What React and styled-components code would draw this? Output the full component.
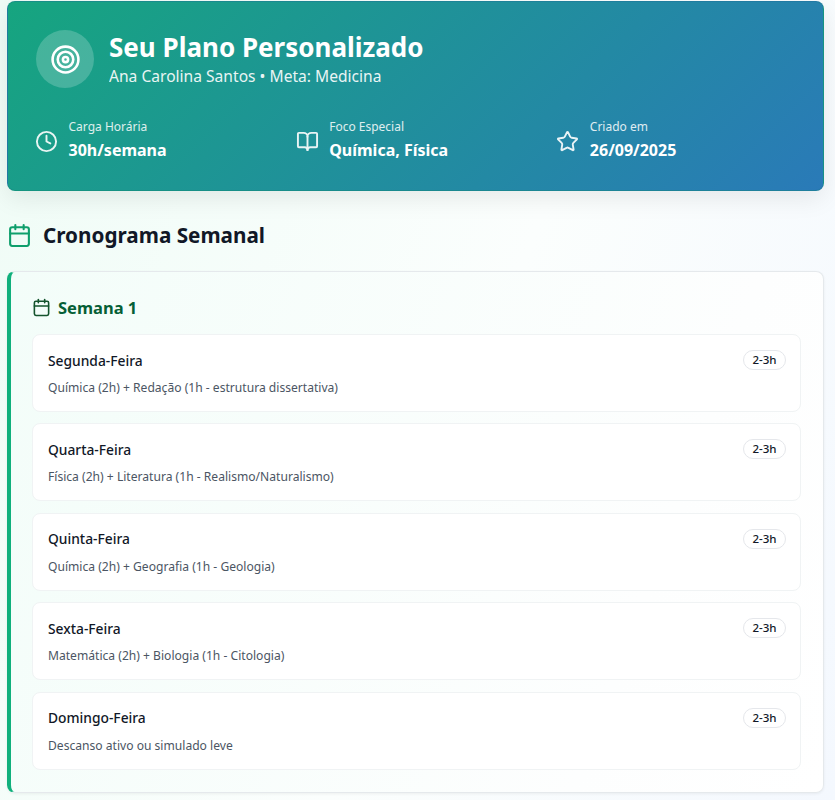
import React from "react";
import styled, { createGlobalStyle } from "styled-components";

const Global = createGlobalStyle`
  html, body { margin: 0; padding: 0; }
  body {
    min-height: 800px;
    overflow: hidden;
    background: linear-gradient(110deg, #effcf6 0%, #fbfefd 55%, #f4f8fe 100%);
    font-family: "Noto Sans", "Open Sans", sans-serif;
    color: #111827;
  }
`;

const Page = styled.main`
  display: flex;
  flex-direction: column;
  width: 817px;
  padding: 1px 0 0 7px;
`;

const Hero = styled.section`
  box-sizing: border-box;
  height: 190px;
  padding: 28px 28px 0;
  border-radius: 8px;
  border: 1px solid rgba(20, 120, 130, 0.35);
  background: linear-gradient(135deg, #16a57f 0%, #2a7ab8 100%);
  box-shadow: 0 8px 24px rgba(0, 0, 0, 0.08);
  color: #fff;
`;

const HeroTop = styled.div`
  display: flex;
  align-items: center;
  gap: 15px;
`;

const Badge = styled.div`
  display: flex;
  align-items: center;
  justify-content: center;
  width: 58px;
  height: 58px;
  border-radius: 50%;
  background: rgba(255, 255, 255, 0.2);
`;

const Title = styled.h1`
  margin: 0;
  font-size: 26px;
  line-height: 35px;
  font-weight: 700;
`;

const Subtitle = styled.p`
  margin: 0;
  font-size: 15.6px;
  line-height: 23px;
  font-weight: 400;
  opacity: 0.9;
`;

const Stats = styled.div`
  display: grid;
  grid-template-columns: repeat(3, 1fr);
  column-gap: 23px;
  margin-top: 30px;
`;

const Stat = styled.div`
  display: flex;
  align-items: center;
  gap: 10.5px;
`;

const StatIcon = styled.span`
  display: flex;
  margin-left: -1px;
  opacity: 0.9;
`;

const StatText = styled.div`
  display: flex;
  flex-direction: column;
`;

const StatLabel = styled.span`
  font-size: 12px;
  line-height: 18px;
  opacity: 0.85;
`;

const StatValue = styled.span`
  font-size: 16px;
  line-height: 28px;
  font-weight: 700;
`;

const SectionHead = styled.div`
  display: flex;
  align-items: center;
  gap: 11px;
  height: 30px;
  margin-top: 29px;
  color: #0f9f6c;
`;

const SectionTitle = styled.h2`
  margin: 0;
  font-size: 20.7px;
  font-weight: 700;
  color: #111827;
`;

const WeekCard = styled.section`
  box-sizing: border-box;
  height: 522px;
  margin-top: 21px;
  padding: 22px 22px 0 21px;
  border: 1px solid #e5e9ec;
  border-left: 4px solid #10b07c;
  border-radius: 8px;
  background: linear-gradient(110deg, #f3fdf9 0%, #fdfefe 75%, #ffffff 100%);
  box-shadow: 0 1px 3px rgba(0, 0, 0, 0.06);
`;

const WeekHead = styled.div`
  display: flex;
  align-items: center;
  gap: 7px;
  height: 26px;
  color: #14532d;
`;

const WeekTitle = styled.h3`
  margin: 0;
  font-size: 16.5px;
  font-weight: 700;
  color: #065f36;
`;

const Days = styled.div`
  display: flex;
  flex-direction: column;
  gap: 11.4px;
  margin-top: 14px;
`;

const Day = styled.article`
  box-sizing: border-box;
  height: 78px;
  padding: 14px 14px 0 15px;
  border: 1px solid #f0f3f4;
  border-radius: 8px;
  background: #fff;
`;

const DayTop = styled.div`
  display: flex;
  align-items: center;
  justify-content: space-between;
  height: 22px;
`;

const DayName = styled.h4`
  margin: 0;
  font-size: 13.8px;
  font-weight: 500;
  color: #111827;
`;

const Pill = styled.span`
  box-sizing: border-box;
  width: 43px;
  height: 20px;
  border: 1px solid #e5e7eb;
  border-radius: 10px;
  font-size: 11.5px;
  line-height: 18px;
  font-weight: 500;
  text-align: center;
  color: #111827;
`;

const DayText = styled.p`
  margin: 8px 0 0;
  font-size: 12.1px;
  line-height: 18px;
  color: #4b5563;
`;

const Svg = ({ size, children }) => (
  <svg width={size} height={size} viewBox="0 0 24 24" fill="none" stroke="currentColor" strokeWidth={2} strokeLinecap="round" strokeLinejoin="round">
    {children}
  </svg>
);

const Target = () => (
  <Svg size={31}>
    <circle cx="12" cy="12" r="10" />
    <circle cx="12" cy="12" r="6" />
    <circle cx="12" cy="12" r="2" />
  </Svg>
);
const Clock = () => (
  <Svg size={23}>
    <circle cx="12" cy="12" r="10" />
    <path d="M12 6v6l4 2" />
  </Svg>
);
const Book = () => (
  <Svg size={23}>
    <path d="M12 7v14" />
    <path d="M3 18a1 1 0 0 1-1-1V4a1 1 0 0 1 1-1h5a4 4 0 0 1 4 4 4 4 0 0 1 4-4h5a1 1 0 0 1 1 1v13a1 1 0 0 1-1 1h-6a3 3 0 0 0-3 3 3 3 0 0 0-3-3z" />
  </Svg>
);
const Star = () => (
  <Svg size={23}>
    <path d="M11.525 2.295a.53.53 0 0 1 .95 0l2.31 4.679a2.123 2.123 0 0 0 1.595 1.16l5.166.756a.53.53 0 0 1 .294.904l-3.736 3.638a2.123 2.123 0 0 0-.611 1.878l.882 5.14a.53.53 0 0 1-.771.56l-4.618-2.428a2.122 2.122 0 0 0-1.973 0L6.396 21.01a.53.53 0 0 1-.77-.56l.881-5.139a2.122 2.122 0 0 0-.611-1.879L2.16 9.795a.53.53 0 0 1 .294-.906l5.165-.755a2.122 2.122 0 0 0 1.597-1.16z" />
  </Svg>
);
const Calendar = ({ size }) => (
  <Svg size={size}>
    <path d="M8 2v4" />
    <path d="M16 2v4" />
    <rect width="18" height="18" x="3" y="4" rx="2" />
    <path d="M3 10h18" />
  </Svg>
);

const stats = [
  { icon: <Clock />, label: "Carga Horária", value: "30h/semana" },
  { icon: <Book />, label: "Foco Especial", value: "Química, Física" },
  { icon: <Star />, label: "Criado em", value: "26/09/2025" },
];

const days = [
  ["Segunda-Feira", "Química (2h) + Redação (1h - estrutura dissertativa)"],
  ["Quarta-Feira", "Física (2h) + Literatura (1h - Realismo/Naturalismo)"],
  ["Quinta-Feira", "Química (2h) + Geografia (1h - Geologia)"],
  ["Sexta-Feira", "Matemática (2h) + Biologia (1h - Citologia)"],
  ["Domingo-Feira", "Descanso ativo ou simulado leve"],
];

export default function App() {
  return (
    <Page>
      <Global />
      <Hero>
        <HeroTop>
          <Badge><Target /></Badge>
          <div>
            <Title>Seu Plano Personalizado</Title>
            <Subtitle>Ana Carolina Santos • Meta: Medicina</Subtitle>
          </div>
        </HeroTop>
        <Stats>
          {stats.map((s) => (
            <Stat key={s.label}>
              <StatIcon>{s.icon}</StatIcon>
              <StatText>
                <StatLabel>{s.label}</StatLabel>
                <StatValue>{s.value}</StatValue>
              </StatText>
            </Stat>
          ))}
        </Stats>
      </Hero>
      <SectionHead>
        <Calendar size={25} />
        <SectionTitle>Cronograma Semanal</SectionTitle>
      </SectionHead>
      <WeekCard>
        <WeekHead>
          <Calendar size={19} />
          <WeekTitle>Semana 1</WeekTitle>
        </WeekHead>
        <Days>
          {days.map(([name, text]) => (
            <Day key={name}>
              <DayTop>
                <DayName>{name}</DayName>
                <Pill>2-3h</Pill>
              </DayTop>
              <DayText>{text}</DayText>
            </Day>
          ))}
        </Days>
      </WeekCard>
    </Page>
  );
}
